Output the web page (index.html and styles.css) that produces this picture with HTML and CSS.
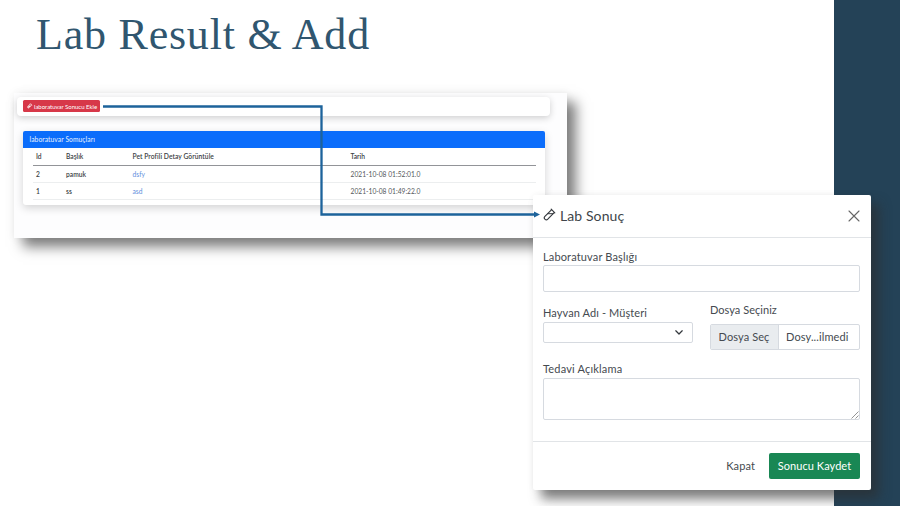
FILE: index.html
```html
<!DOCTYPE html>
<html lang="tr">
<head>
<meta charset="utf-8">
<title>Lab Result &amp; Add</title>
<link rel="stylesheet" href="styles.css">
</head>
<body>
<main class="slide">
  <h1 class="slide-title">Lab Result &amp; Add</h1>
  <aside class="side-band"></aside>

  <section class="list-shot">
    <div class="toolbar">
      <button class="add-btn">
        <svg class="add-icon" viewBox="0 0 16 16"><path d="M9.500 1.500l5 5M10.300 2.300l-8 8a2.400 2.400 0 0 0 3.400 3.400l8-8" fill="none" stroke="currentColor" stroke-width="2.200"/><path d="M5 8h6l-5 5H3z" fill="currentColor"/></svg>
        <span>laboratuvar Sonucu Ekle</span>
      </button>
    </div>
    <div class="card">
      <div class="card-head">laboratuvar Somuçları</div>
      <table class="results">
        <thead><tr><th class="c-id">Id</th><th class="c-title">Başlık</th><th class="c-pet">Pet Profili Detay Görüntüle</th><th>Tarih</th></tr></thead>
        <tbody>
          <tr><th>2</th><th>pamuk</th><td><a>dsfy</a></td><td>2021-10-08 01:52:01.0</td></tr>
          <tr><th>1</th><th>ss</th><td><a>asd</a></td><td>2021-10-08 01:49:22.0</td></tr>
        </tbody>
      </table>
    </div>
  </section>

  <section class="modal">
    <header class="modal-head">
      <svg class="tube" viewBox="0 0 13 13" fill="none" stroke="currentColor" stroke-linecap="round" stroke-linejoin="round"><path d="M8.200 1.200l3.600 3.600M8.700 1.700L1.900 8.300a2.100 2.100 0 0 0 0 2.900 2.100 2.100 0 0 0 2.900 0L11.400 4.400" stroke-width="1.150"/><path d="M4.800 5.700h5" stroke-width="1"/></svg>
      <h2 class="modal-title">Lab Sonuç</h2>
      <svg class="close" viewBox="0 0 12 12"><path d="M1 1l10 10M11 1L1 11" fill="none" stroke="currentColor" stroke-width="1.100" stroke-linecap="round"/></svg>
    </header>
    <div class="modal-body">
      <label class="label wide-label">Laboratuvar Başlığı</label>
      <div class="field input"></div>
      <div class="row">
        <div class="col-select">
          <label class="label animal-label">Hayvan Adı - Müşteri</label>
          <div class="field select"><svg class="chevron" viewBox="0 0 8 5"><path d="M.8.8L4 4 7.200.8" fill="none" stroke="currentColor" stroke-width="1.250" stroke-linecap="round" stroke-linejoin="round"/></svg></div>
        </div>
        <div class="col-file">
          <label class="label file-label">Dosya Seçiniz</label>
          <div class="field file"><span class="file-btn">Dosya Seç</span><span class="file-name">Dosy...ilmedi</span></div>
        </div>
      </div>
      <label class="label note-label">Tedavi Açıklama</label>
      <div class="field area"><svg class="grip" viewBox="0 0 8 8"><path d="M.5 7.500l7-7M4.500 7.500l3-3" fill="none" stroke="currentColor" stroke-width=".8"/></svg></div>
    </div>
    <footer class="modal-foot">
      <span class="cancel">Kapat</span>
      <button class="save">Sonucu Kaydet</button>
    </footer>
  </section>

  <svg class="connector" viewBox="0 0 900 506"><path d="M103 106.500H321.500V214.500H535" fill="none" stroke="#1d639b" stroke-width="2.300"/><path d="M534 211.500l6 3-6 3z" fill="#1d639b"/></svg>
</main>
</body>
</html>
```

FILE: styles.css
```css
* { box-sizing: border-box; }
body { margin: 0; font-family: Lato, "Open Sans", sans-serif; }
h1, h2 { margin: 0; font-weight: 400; }
button { border: 0; font-family: inherit; padding: 0; }
svg { display: block; }

.slide { position: relative; width: 900px; height: 506px; overflow: hidden; background: #fff; display: flex; justify-content: space-between; }
.slide-title { padding: 8px 0 0 36px; font: 400 44px/54px "Liberation Serif", serif; letter-spacing: .78px; color: #30566f; white-space: nowrap; }
.side-band { width: 66.500px; background: #244257; }

.list-shot { position: absolute; left: 14px; top: 93px; width: 553px; height: 144.500px; padding: 4px 17px 0 3px; background: #fdfdfe; box-shadow: 9px 9px 12px rgba(0,0,0,.5), 0 0 10px rgba(0,0,0,.06); }
.toolbar { height: 19px; padding: 3px 0 0 6px; border-radius: 4px; background: #fff; box-shadow: 0 2px 7px rgba(0,0,0,.19); }
.add-btn { display: flex; align-items: center; gap: 1.500px; width: 77px; height: 12px; padding-left: 4px; border-radius: 1.500px; background: #d73849; color: #fff; font-size: 6px; letter-spacing: -.02px; white-space: nowrap; }
.add-icon { width: 5.500px; height: 5.500px; flex: none; }
.card { margin: 15px 5px 0 6px; height: 74px; border-radius: 3px; background: #fff; box-shadow: 0 3px 9px rgba(0,0,0,.17); }
.card-head { height: 17px; padding-left: 6.500px; border-radius: 2px 2px 0 0; background: #0b6dfb; color: #e9f2ff; font-size: 6.700px; line-height: 17px; letter-spacing: .08px; }
.results { width: 503px; margin-left: 10px; border-collapse: collapse; table-layout: fixed; font-size: 6.700px; color: #3a3e43; }
.results th, .results td { height: 17px; padding: 0 0 0 3px; text-align: left; line-height: 10px; border-bottom: 1px solid #eceeef; white-space: nowrap; }
.results th { font-weight: 600; }
.results thead th { border-bottom-color: #929498; }
.results td { color: #55585c; letter-spacing: 0; }
.results td a { color: #5f8fdd; }
.c-id { width: 30px; }
.c-title { width: 66.500px; }
.c-pet { width: 218px; letter-spacing: .06px; }

.modal { position: absolute; left: 533px; top: 195px; width: 338px; height: 295px; border-radius: 2px; background: #fff; color: #454a50; box-shadow: 8px 9px 12px rgba(45,45,45,.62), 0 0 7px rgba(0,0,0,.04); }
.modal-head { display: flex; align-items: center; height: 43px; padding: 0 11px 1px 10px; border-bottom: 1px solid #e1e4e7; }
.tube { width: 13px; height: 13px; margin-top: -3px; color: #34383d; }
.modal-title { margin-left: 4px; font-size: 14px; line-height: 20px; letter-spacing: .1px; color: #40454a; }
.close { width: 12px; height: 12px; margin-left: auto; color: #666; }
.modal-body { height: 203px; padding: 11px 11px 0 10px; }
.label { display: block; height: 16px; font-size: 11px; line-height: 16px; white-space: nowrap; }
.wide-label { line-height: 15px; letter-spacing: .15px; }
.field { border: 1px solid #d6dae0; border-radius: 2px; background: #fff; }
.input { height: 27px; }
.row { display: flex; justify-content: space-between; margin-top: 10px; height: 59px; }
.col-select, .col-file { width: 150px; }
.col-select { padding-top: 3px; }
.animal-label { height: 17px; letter-spacing: .1px; }
.select { height: 21px; display: flex; align-items: center; justify-content: flex-end; padding-right: 9px; }
.chevron { width: 8px; height: 5px; color: #34383d; }
.file-label { height: 22px; letter-spacing: .03px; }
.file { height: 26px; display: flex; font-size: 11px; line-height: 24px; white-space: nowrap; overflow: hidden; }
.file-btn { width: 67.500px; padding-left: 7.500px; background: #e9ecef; border-right: 1px solid #d6dae0; letter-spacing: .1px; }
.file-name { padding-left: 7.500px; letter-spacing: .1px; }
.note-label { height: 17px; line-height: 16px; letter-spacing: .18px; }
.area { height: 42px; display: flex; align-items: flex-end; justify-content: flex-end; }
.grip { width: 8px; height: 8px; color: #777; }
.modal-foot { height: 49px; display: flex; align-items: center; justify-content: flex-end; gap: 14px; padding-right: 11px; border-top: 1px solid #e1e4e7; font-size: 11px; }
.cancel { margin-top: -2px; letter-spacing: .1px; }
.save { width: 91px; height: 26px; padding-bottom: 1px; border-radius: 2px; background: #198754; color: #fff; font-size: 11px; letter-spacing: .06px; white-space: nowrap; }

.connector { position: absolute; left: 0; top: 0; width: 900px; height: 506px; pointer-events: none; }
```
